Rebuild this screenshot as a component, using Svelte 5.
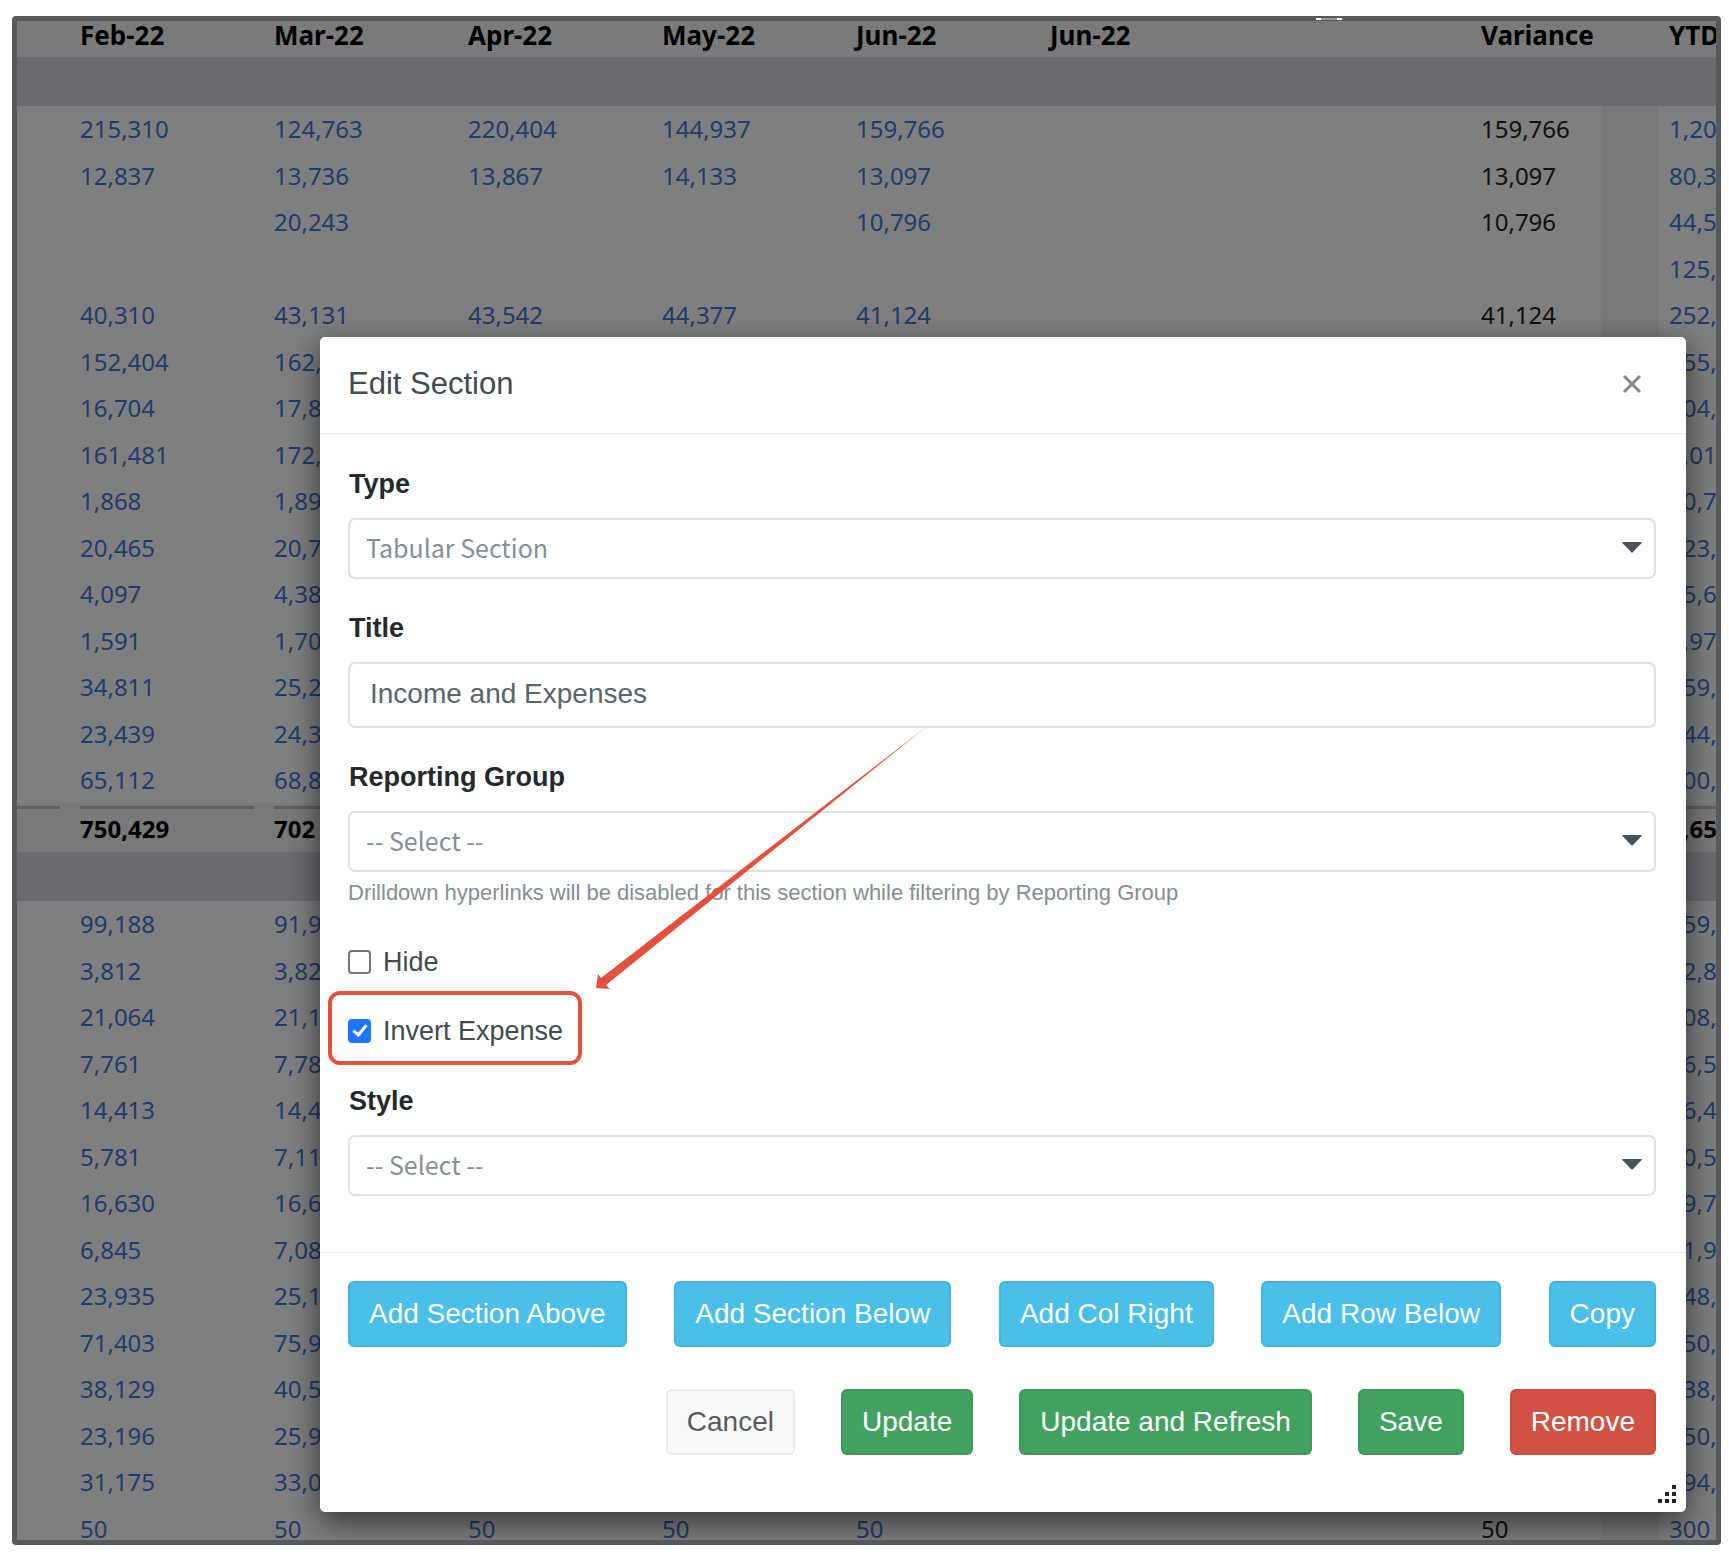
<script lang="ts">
  type Row = string[];

  // Feb, Mar, Apr, May, Jun, Variance, YTD
  const income: Row[] = [
    ["215,310", "124,763", "220,404", "144,937", "159,766", "159,766", "1,20"],
    ["12,837", "13,736", "13,867", "14,133", "13,097", "13,097", "80,3"],
    ["", "20,243", "", "", "10,796", "10,796", "44,5"],
    ["", "", "", "", "", "", "125,"],
    ["40,310", "43,131", "43,542", "44,377", "41,124", "41,124", "252,"],
    ["152,404", "162,", "", "", "", "", "155,"],
    ["16,704", "17,8", "", "", "", "", "104,"],
    ["161,481", "172,", "", "", "", "", "1,01"],
    ["1,868", "1,89", "", "", "", "", "10,7"],
    ["20,465", "20,7", "", "", "", "", "123,"],
    ["4,097", "4,38", "", "", "", "", "25,6"],
    ["1,591", "1,70", "", "", "", "", "9,97"],
    ["34,811", "25,2", "", "", "", "", "159,"],
    ["23,439", "24,3", "", "", "", "", "144,"],
    ["65,112", "68,8", "", "", "", "", "400,"],
  ];
  const expenses: Row[] = [
    ["99,188", "91,9", "", "", "", "", "559,"],
    ["3,812", "3,82", "", "", "", "", "22,8"],
    ["21,064", "21,1", "", "", "", "", "108,"],
    ["7,761", "7,78", "", "", "", "", "46,5"],
    ["14,413", "14,4", "", "", "", "", "86,4"],
    ["5,781", "7,11", "", "", "", "", "30,5"],
    ["16,630", "16,6", "", "", "", "", "99,7"],
    ["6,845", "7,08", "", "", "", "", "41,9"],
    ["23,935", "25,1", "", "", "", "", "148,"],
    ["71,403", "75,9", "", "", "", "", "450,"],
    ["38,129", "40,5", "", "", "", "", "238,"],
    ["23,196", "25,9", "", "", "", "", "150,"],
    ["31,175", "33,0", "", "", "", "", "194,"],
    ["50", "50", "50", "50", "50", "50", "300"],
  ];
  const totals: Row = ["750,429", "702", "", "", "", "", "4,65"];

  let open = $state(true);
  let title = $state("Income and Expenses");
  let hide = $state(false);
  let invert = $state(true);
</script>

{#snippet caret()}
  <svg class="caret" viewBox="0 0 20 11" aria-hidden="true">
    <path d="M1 0h18q1.500 0 .4 1.200L11 10q-1 1-2 0L.6 1.200Q-.5 0 1 0z" />
  </svg>
{/snippet}

{#snippet line(row: Row)}
  <tr>
    <td></td>
    {#each row.slice(0, 5) as value}
      <td><a href="#drill">{value}</a></td>
    {/each}
    <td></td>
    <td>{row[5]}</td>
    <td class="spacer"></td>
    <td class="last"><a href="#drill">{row[6]}</a></td>
  </tr>
{/snippet}

<div class="page">
  <div class="frame">
    <table>
      <colgroup>
        <col class="c-first" />
        <col class="c-month" />
        <col class="c-month" />
        <col class="c-month" />
        <col class="c-month" />
        <col class="c-month" />
        <col class="c-budget" />
        <col class="c-variance" />
        <col class="c-spacer" />
        <col />
      </colgroup>
      <thead>
        <tr>
          <th></th>
          <th>Feb-22</th>
          <th>Mar-22</th>
          <th>Apr-22</th>
          <th>May-22</th>
          <th>Jun-22</th>
          <th>Jun-22</th>
          <th>Variance</th>
          <th></th>
          <th class="last">YTD</th>
        </tr>
      </thead>
      <tbody>
        <tr class="band"><td colspan="10"></td></tr>
      </tbody>
      <tbody class="lines">
        {#each income as row}
          {@render line(row)}
        {/each}
      </tbody>
      <tbody>
        <tr class="total">
          <td class="first"><div></div></td>
          {#each totals.slice(0, 5) as value}
            <td><div>{value}</div></td>
          {/each}
          <td><div></div></td>
          <td><div></div></td>
          <td></td>
          <td class="last"><div>{totals[6]}</div></td>
        </tr>
        <tr class="band"><td colspan="10"></td></tr>
      </tbody>
      <tbody class="lines">
        {#each expenses as row}
          {@render line(row)}
        {/each}
      </tbody>
    </table>

    {#if open}
      <div class="overlay">
        <div class="modal" role="dialog" aria-labelledby="modal-title">
          <header>
            <h1 id="modal-title">Edit Section</h1>
            <button class="close" aria-label="Close" onclick={() => (open = false)}>
              <svg viewBox="0 0 20 20" aria-hidden="true"><path d="M2 2l16 16M18 2L2 18" /></svg>
            </button>
          </header>

          <form id="section-form" onsubmit={(e) => e.preventDefault()}>
            <div class="field">
              <label for="type">Type</label>
              <div class="select">
                <select id="type"><option>Tabular Section</option></select>
                {@render caret()}
              </div>
            </div>
            <div class="field">
              <label for="title">Title</label>
              <input id="title" type="text" bind:value={title} />
            </div>
            <div class="field">
              <label for="group">Reporting Group</label>
              <div class="select">
                <select id="group"><option>-- Select --</option></select>
                {@render caret()}
              </div>
              <small>Drilldown hyperlinks will be disabled for this section while filtering by Reporting Group</small>
            </div>
            <div class="checks">
              <label class="check"><input type="checkbox" bind:checked={hide} />Hide</label>
              <label class="check marked"><input type="checkbox" bind:checked={invert} />Invert Expense</label>
            </div>
            <div class="field">
              <label for="style">Style</label>
              <div class="select">
                <select id="style"><option>-- Select --</option></select>
                {@render caret()}
              </div>
            </div>
          </form>

          <footer>
            <div class="row spread">
              <button class="info">Add Section Above</button>
              <button class="info">Add Section Below</button>
              <button class="info">Add Col Right</button>
              <button class="info">Add Row Below</button>
              <button class="info">Copy</button>
            </div>
            <div class="row">
              <button class="light" onclick={() => (open = false)}>Cancel</button>
              <button class="success">Update</button>
              <button class="success">Update and Refresh</button>
              <button class="success">Save</button>
              <button class="danger">Remove</button>
            </div>
          </footer>

          <svg class="arrow" viewBox="0 0 332 264" aria-hidden="true">
            <path d="M1 262L3 248L6 252L331 1L11 259L15 263z" />
          </svg>
          <svg class="grip" viewBox="0 0 18 18" aria-hidden="true">
            <path d="M14 0h4v4h-4zM7 7h4v4H7zM14 7h4v4h-4zM0 14h4v4H0zM7 14h4v4H7zM14 14h4v4h-4z" />
          </svg>
        </div>
      </div>
    {/if}
  </div>
  <span class="handle"></span>
</div>

<style>
  :global(body) {
    margin: 0;
    background: #fff;
  }
  .page {
    box-sizing: border-box;
    position: relative;
    height: 100vh;
    padding: 16px 8px 9px 12px;
    display: flex;
  }
  .frame {
    flex: 1;
    min-width: 0;
    position: relative;
    overflow: hidden;
    border: 5px solid #595959;
    border-radius: 4px;
  }

  /* report grid */
  table {
    width: 100%;
    table-layout: fixed;
    border-collapse: collapse;
    font: 24px/32px "Noto Sans", "Open Sans", sans-serif;
    color: #222;
  }
  .c-first { width: 53px; }
  .c-month { width: 194px; }
  .c-budget { width: 431px; }
  .c-variance { width: 130px; }
  .c-spacer { width: 58px; }
  th,
  td {
    padding: 0 10px;
    text-align: left;
    white-space: nowrap;
  }
  .first {
    padding-left: 0;
  }
  .last {
    padding-right: 0;
  }
  thead tr {
    height: 36px;
    background: #f5f5f5;
  }
  th {
    vertical-align: top;
    font-size: 26px;
    line-height: 28px;
    font-weight: 700;
    color: #000;
  }
  .band {
    height: 49px;
    background: #d5d7de;
  }
  .lines tr { height: 46px; }
  .lines tr:nth-child(even) { height: 47px; }
  .lines a {
    color: #4279d4;
    text-decoration: none;
  }
  .spacer { background: #f3f3f3; }
  .total {
    height: 49px;
    background: #f3f3f3;
    font-weight: 700;
    color: #000;
  }
  .total td {
    vertical-align: top;
    padding-top: 3px;
  }
  .total div {
    min-height: 36px;
    border-top: 3px solid #c0c0c0;
    line-height: 40px;
  }

  .overlay {
    position: absolute;
    inset: 0;
    padding: 316px 30px 0 303px;
    background: rgba(0, 0, 0, 0.5);
  }
  /* drag handle over the top border */
  .handle {
    position: absolute;
    top: 18px;
    left: 1316px;
    width: 16px;
    height: 2px;
    border: solid #fff;
    border-width: 0 5px;
    background: #999;
  }

  /* dialog */
  .modal {
    position: relative;
    background: #fff;
    border-radius: 5px;
    box-shadow: 0 10px 32px rgba(0, 0, 0, 0.6);
    font: 27px/32px "Liberation Sans", Arial, sans-serif;
    color: #444a50;
  }
  header {
    box-sizing: border-box;
    display: flex;
    align-items: center;
    justify-content: space-between;
    height: 98px;
    padding: 0 40px 3px 28px;
    border-bottom: 2px solid #f0f0f0;
  }
  h1 {
    margin: 0;
    font-size: 31px;
    font-weight: 400;
  }
  button {
    font: inherit;
    cursor: pointer;
  }
  .close {
    display: flex;
    padding: 4px;
    border: 0;
    background: none;
  }
  .close svg {
    width: 20px;
    height: 20px;
    stroke: #858585;
    stroke-width: 3;
  }
  form {
    padding: 32px 30px 56px 28px;
  }
  .field {
    display: flex;
    flex-direction: column;
    margin-bottom: 32px;
  }
  .field:last-child {
    margin-bottom: 0;
  }
  .field label {
    padding: 1px 0 0 1px;
    margin-bottom: 18px;
    font-weight: 700;
    color: #25292d;
  }
  .select {
    display: flex;
    position: relative;
  }
  select,
  .field input {
    box-sizing: border-box;
    width: 100%;
    border: 2px solid #dce1e6;
    border-radius: 7px;
    background: #fff;
  }
  select {
    appearance: none;
    height: 61px;
    padding: 0 60px 3px 16px;
    font: 25px/32px "Noto Sans CJK SC", sans-serif;
    color: #868e96;
  }
  .field input {
    height: 66px;
    padding: 0 20px 2px;
    font: inherit;
    font-size: 28px;
    color: #5c646c;
  }
  .caret {
    position: absolute;
    top: 24px;
    right: 14px;
    width: 20px;
    height: 11px;
    fill: #49525b;
    pointer-events: none;
  }
  small {
    margin-top: 8px;
    font-size: 22px;
    line-height: 26px;
    color: #868e96;
  }
  .checks {
    display: flex;
    flex-direction: column;
    align-items: flex-start;
    gap: 37px;
    margin: 40px 0 37px;
  }
  .check {
    display: flex;
    align-items: center;
    gap: 12px;
    position: relative;
  }
  .check input {
    appearance: none;
    box-sizing: border-box;
    width: 23px;
    height: 24px;
    margin: 0;
    border: 2px solid #767676;
    border-radius: 4px;
    background: #fff;
  }
  .check input:checked {
    border-color: #1f75fe;
    background: #1f75fe;
  }
  .check input:checked::after {
    content: "";
    display: block;
    width: 5px;
    height: 11px;
    margin: 1px 6px;
    border: solid #fff;
    border-width: 0 3px 3px 0;
    transform: rotate(40deg);
  }
  /* callout around the option */
  .marked::before {
    content: "";
    position: absolute;
    inset: -24px -19px -18px -20px;
    border: 4px solid #e5503c;
    border-radius: 12px;
    pointer-events: none;
  }
  footer {
    display: flex;
    flex-direction: column;
    gap: 42px;
    padding: 28px 30px 57px 28px;
    border-top: 1px solid #e3e8ec;
  }
  .row {
    display: flex;
    flex-wrap: wrap;
    justify-content: flex-end;
    gap: 46px;
  }
  .spread {
    justify-content: space-between;
    gap: 20px;
  }
  .row button {
    height: 66px;
    padding: 0 19px;
    border: 2px solid rgba(0, 0, 0, 0.06);
    border-radius: 6px;
    font-size: 28px;
    color: #fff;
  }
  .row .info { background: #49bfea; }
  .row .success { background: #41a25f; }
  .row .danger { background: #d15244; }
  .row .light {
    background: #f8f9fb;
    color: #5a5a60;
  }
  .arrow {
    position: absolute;
    top: 389px;
    left: 275px;
    width: 332px;
    height: 264px;
    fill: #e5503c;
    pointer-events: none;
  }
  .grip {
    position: absolute;
    right: 10px;
    bottom: 9px;
    width: 18px;
    height: 18px;
    fill: #222;
  }
</style>
